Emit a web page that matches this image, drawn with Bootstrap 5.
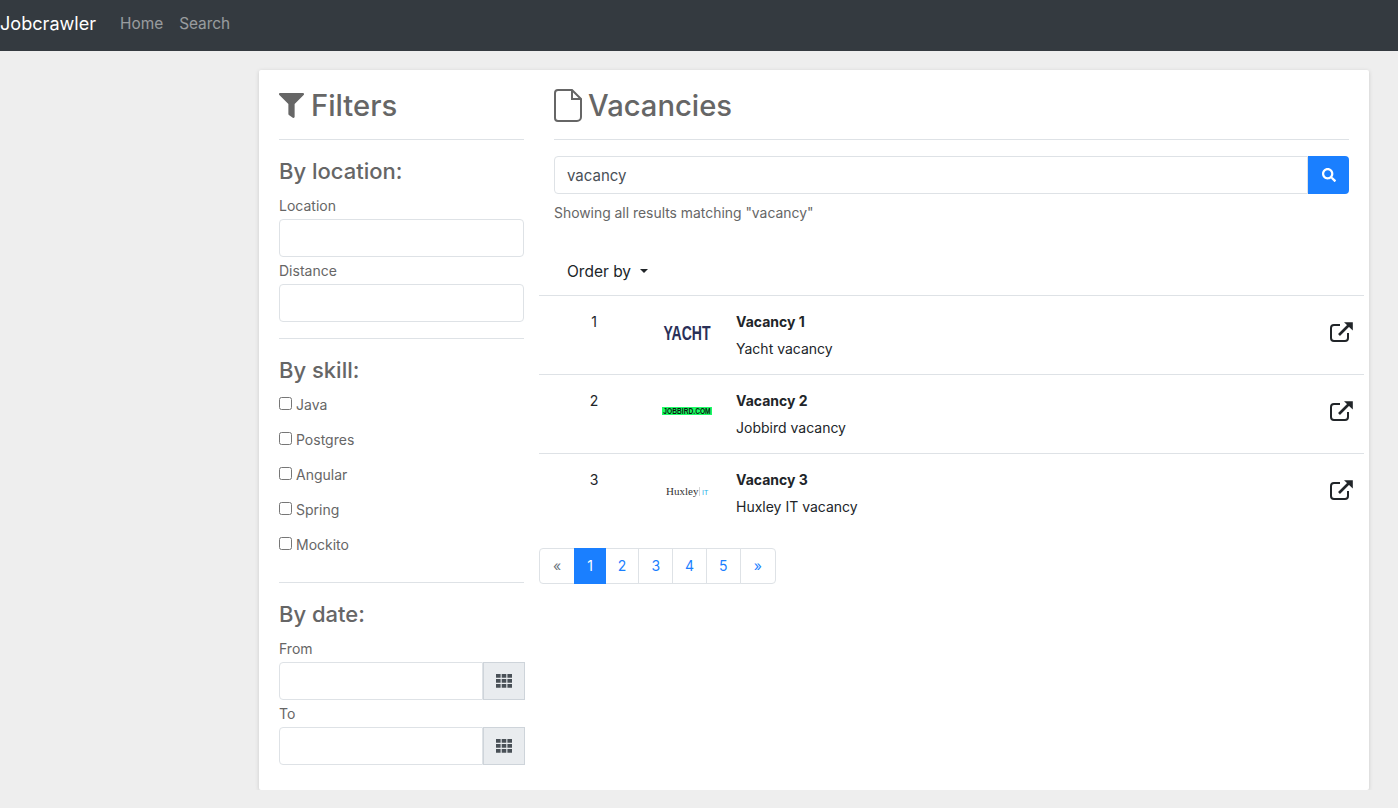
<!DOCTYPE html>
<html lang="en">
<head>
    <meta charset="UTF-8">
    <meta name="viewport" content="width=device-width, initial-scale=1.0">
    <title>Jobcrawler</title>
    <link href="https://cdn.jsdelivr.net/npm/bootstrap@5.3.0/dist/css/bootstrap.min.css" rel="stylesheet">
    <style>
        body { background: #eeeeee; font-family: Inter, "Liberation Sans", sans-serif; font-size: 14px; color: #212529; }
        .form-control { border-radius: 4px; }
        .top-bar { background: #343a40; height: 51px; padding: 0 0 4px; }
        .top-bar .navbar-brand { color: #fff; font-size: 18.100px; padding: 0; margin: 0 15px 0 0; width: 97px; white-space: nowrap; }
        .top-bar .nav-link { color: rgba(255,255,255,.5); font-size: 15.400px; padding: 0 8px; }
        .sheet { width: 1110px; height: 720px; margin: 19px 0 0 259px; background: #fff; box-shadow: 0 1px 4px rgba(0,0,0,.15); border-radius: 2px; color: #666; }
        .side-col { width: 280px; padding: 0 15px 0 20px; flex: none; }
        .main-col { width: 825px; flex: none; }
        .main-inner { padding: 0 15px; }
        .big-head { font-size: 29.200px; font-weight: 550; color: #666; margin: 0; height: 70px; display: flex; align-items: center; gap: 7px; line-height: 1; border-bottom: 1px solid #dee2e6; padding-top: 2px; }
        .main-inner .big-head { gap: 6px; }
        .sub-head { font-size: 22px; font-weight: 550; color: #666; margin: 0; line-height: 28px; }
        .sub-first { margin: 17px 0 11px; }
        .sub-skill { margin-bottom: 3px; }
        .sub-date { margin-bottom: 11px; }
        .side-col label.field-label { display: block; line-height: 20px; margin: 0 0 3px; color: #666; }
        .side-col .form-control { height: 38px; }
        .side-rule { margin: 16px 0 17px; border: 0; border-top: 1px solid #dee2e6; opacity: 1; }
        .side-rule-wide { margin-top: 20px; }
        .skill { display: flex; align-items: center; height: 35px; gap: 4px; color: #666; }
        .skill input { width: 13px; height: 13px; margin: 0 0 3px; }
        .date-group { margin-right: -1px; }
        .date-btn { width: 42px; flex: none; background: #e9ecef; border: 1px solid #ced4da; display: flex; align-items: center; justify-content: center; padding: 0; border-radius: 0; }
        .search-input { height: 38px; font-size: 15px; color: #495057; }
        .search-btn { width: 41px; height: 38px; background: #1a7fff; border: 0; display: flex; align-items: center; justify-content: center; padding: 0; border-radius: 4px; }
        .search-btn:hover { background: #1a7fff; }
        .result-note { margin: 9px 0 0; line-height: 20px; color: #666; font-size: 13.900px; }
        .order-btn { font-size: 15.500px; color: #212529; background: none; border: 0; padding: 0 0 0 28px; height: 24px; margin-top: 37px; margin-bottom: 11px; display: block; }
        .order-btn::after { margin-left: 9px; }
        .job-row { height: 79px; border-top: 1px solid #dee2e6; display: flex; color: #212529; }
        .job-num { width: 110px; text-align: center; padding-top: 16px; line-height: 20px; }
        .job-logo { width: 87px; flex: none; padding-left: 13px; }
        .job-text { flex: 1; padding-top: 16px; line-height: 20px; }
        .job-text b { display: block; font-weight: 700; margin-bottom: 7px; }
        .job-link { padding: 23px 10px 0 0; }
        .pager { margin: 16px 0 0; }
        .pager .page-link { height: 36px; padding: 0 12px; line-height: 34px; font-size: 14px; color: #1a7fff; border-color: #dee2e6; background: #fff; }
        .pager .page-item:first-child .page-link { padding: 0 13px; border-radius: 4px 0 0 4px; color: #6c757d; }
        .pager .page-item:last-child .page-link { padding: 0 13px; border-radius: 0 4px 4px 0; }
        .pager .active .page-link { background: #1a7fff; border-color: #1a7fff; color: #fff; }
    </style>
</head>
<body>

    <nav class="navbar top-bar">
        <div class="d-flex align-items-center">
            <a class="navbar-brand" href="#">Jobcrawler</a>
            <ul class="nav">
                <li class="nav-item"><a class="nav-link" href="#">Home</a></li>
                <li class="nav-item"><a class="nav-link" href="#">Search</a></li>
            </ul>
        </div>
    </nav>

    <div class="sheet d-flex">
        <div class="side-col">
            <h2 class="big-head">
                <svg width="25" height="25" viewBox="0 0 512 512" fill="#666"><path d="M487.976 0H24.028C2.71 0-8.047 25.866 7.058 40.971L192 225.941V432c0 7.831 3.821 15.17 10.237 19.662l80 55.98C298.02 518.69 320 507.493 320 487.98V225.941l184.947-184.97C520.021 25.896 509.338 0 487.976 0z"/></svg>
                Filters
            </h2>
            <h3 class="sub-head sub-first">By location:</h3>
            <label class="field-label">Location</label>
            <input type="text" class="form-control">
            <label class="field-label mt-1">Distance</label>
            <input type="text" class="form-control">
            <hr class="side-rule">
            <h3 class="sub-head sub-skill">By skill:</h3>
            <div class="skill"><input type="checkbox"> Java</div>
            <div class="skill"><input type="checkbox"> Postgres</div>
            <div class="skill"><input type="checkbox"> Angular</div>
            <div class="skill"><input type="checkbox"> Spring</div>
            <div class="skill"><input type="checkbox"> Mockito</div>
            <hr class="side-rule side-rule-wide">
            <h3 class="sub-head sub-date">By date:</h3>
            <label class="field-label">From</label>
            <div class="d-flex date-group">
                <input type="text" class="form-control rounded-end-0">
                <button class="date-btn" type="button"><svg width="16" height="14" viewBox="0 0 16 14" fill="#495057"><path d="M0 0h4.600v3.800H0zM5.700 0h4.600v3.800H5.700zM11.400 0H16v3.800h-4.600zM0 5h4.600v3.800H0zM5.700 5h4.600v3.800H5.700zM11.400 5H16v3.800h-4.600zM0 10h4.600v3.800H0zM5.700 10h4.600v3.800H5.700zM11.400 10H16v3.800h-4.600z"/></svg></button>
            </div>
            <label class="field-label mt-1">To</label>
            <div class="d-flex date-group">
                <input type="text" class="form-control rounded-end-0">
                <button class="date-btn" type="button"><svg width="16" height="14" viewBox="0 0 16 14" fill="#495057"><path d="M0 0h4.600v3.800H0zM5.700 0h4.600v3.800H5.700zM11.400 0H16v3.800h-4.600zM0 5h4.600v3.800H0zM5.700 5h4.600v3.800H5.700zM11.400 5H16v3.800h-4.600zM0 10h4.600v3.800H0zM5.700 10h4.600v3.800H5.700zM11.400 10H16v3.800h-4.600z"/></svg></button>
            </div>
        </div>

        <div class="main-col">
            <div class="main-inner">
                <h2 class="big-head">
                    <svg width="28" height="33" viewBox="0 0 28 33" fill="none" stroke="#666" stroke-width="2"><path d="M4 1h14l9 9v18a4 4 0 0 1-4 4H4a3 3 0 0 1-3-3V4a3 3 0 0 1 3-3z"/><path d="M18 1v9h9"/></svg>
                    Vacancies
                </h2>
                <div class="d-flex mt-3">
                    <input type="text" class="form-control search-input rounded-end-0" value="vacancy">
                    <button class="btn search-btn rounded-start-0 flex-shrink-0" type="button">
                        <svg width="14" height="14" viewBox="0 0 512 512" fill="#fff"><path d="M505 442.7L405.3 343c-4.5-4.5-10.6-7-17-7H372c27.6-35.3 44-79.7 44-128C416 93.1 322.9 0 208 0S0 93.1 0 208s93.1 208 208 208c48.3 0 92.7-16.4 128-44v16.3c0 6.4 2.5 12.5 7 17l99.7 99.7c9.4 9.4 24.6 9.4 33.9 0l28.3-28.3c9.4-9.4 9.4-24.6.1-34zM208 336c-70.7 0-128-57.2-128-128 0-70.7 57.2-128 128-128 70.7 0 128 57.2 128 128 0 70.7-57.2 128-128 128z"/></svg>
                    </button>
                </div>
                <p class="result-note">Showing all results matching "vacancy"</p>
            </div>
            <button class="dropdown-toggle order-btn" type="button">Order by</button>

            <div class="job-row">
                <div class="job-num">1</div>
                <div class="job-logo">
                    <svg width="50" height="60" viewBox="0 0 50 60"><text transform="translate(25 44) scale(.67 1)" text-anchor="middle" font-family="Liberation Sans" font-weight="700" font-size="21" fill="#2a3058">YACHT</text></svg>
                </div>
                <div class="job-text"><b>Vacancy 1</b>Yacht vacancy</div>
                <div class="job-link"><svg width="24" height="21" viewBox="0 0 24 21" fill="none" stroke="#212529" stroke-width="2"><path d="M18 12v5a3 3 0 0 1-3 3H4a3 3 0 0 1-3-3V7a3 3 0 0 1 3-3h6"/><path d="M9 14L20 3" stroke-width="2.6"/><path d="M14 1.200h8.800V9.500z" fill="#212529" stroke="none"/></svg></div>
            </div>
            <div class="job-row">
                <div class="job-num">2</div>
                <div class="job-logo">
                    <svg width="50" height="60" viewBox="0 0 50 60"><rect y="32" width="50" height="8" fill="#1dfc64"/><text transform="translate(25 39.300) scale(.74 1)" text-anchor="middle" font-family="Liberation Sans" font-weight="700" font-size="9" fill="#0a1a10">JOBBIRD.COM</text></svg>
                </div>
                <div class="job-text"><b>Vacancy 2</b>Jobbird vacancy</div>
                <div class="job-link"><svg width="24" height="21" viewBox="0 0 24 21" fill="none" stroke="#212529" stroke-width="2"><path d="M18 12v5a3 3 0 0 1-3 3H4a3 3 0 0 1-3-3V7a3 3 0 0 1 3-3h6"/><path d="M9 14L20 3" stroke-width="2.6"/><path d="M14 1.200h8.800V9.500z" fill="#212529" stroke="none"/></svg></div>
            </div>
            <div class="job-row">
                <div class="job-num">3</div>
                <div class="job-logo">
                    <svg width="50" height="60" viewBox="0 0 50 60"><text x="4" y="41" font-family="Liberation Serif" font-size="11" fill="#333">Huxley</text><rect x="37" y="33" width=".6" height="9" fill="#bbb"/><text x="40" y="41" font-family="Liberation Sans" font-size="7" fill="#2aaee6">IT</text></svg>
                </div>
                <div class="job-text"><b>Vacancy 3</b>Huxley IT vacancy</div>
                <div class="job-link"><svg width="24" height="21" viewBox="0 0 24 21" fill="none" stroke="#212529" stroke-width="2"><path d="M18 12v5a3 3 0 0 1-3 3H4a3 3 0 0 1-3-3V7a3 3 0 0 1 3-3h6"/><path d="M9 14L20 3" stroke-width="2.6"/><path d="M14 1.200h8.800V9.500z" fill="#212529" stroke="none"/></svg></div>
            </div>

            <ul class="pagination pager">
                <li class="page-item"><a class="page-link" href="#">«</a></li>
                <li class="page-item active"><a class="page-link" href="#">1</a></li>
                <li class="page-item"><a class="page-link" href="#">2</a></li>
                <li class="page-item"><a class="page-link" href="#">3</a></li>
                <li class="page-item"><a class="page-link" href="#">4</a></li>
                <li class="page-item"><a class="page-link" href="#">5</a></li>
                <li class="page-item"><a class="page-link" href="#">»</a></li>
            </ul>
        </div>
    </div>

    <script src="https://cdn.jsdelivr.net/npm/bootstrap@5.3.0/dist/js/bootstrap.bundle.min.js"></script>
</body>
</html>
